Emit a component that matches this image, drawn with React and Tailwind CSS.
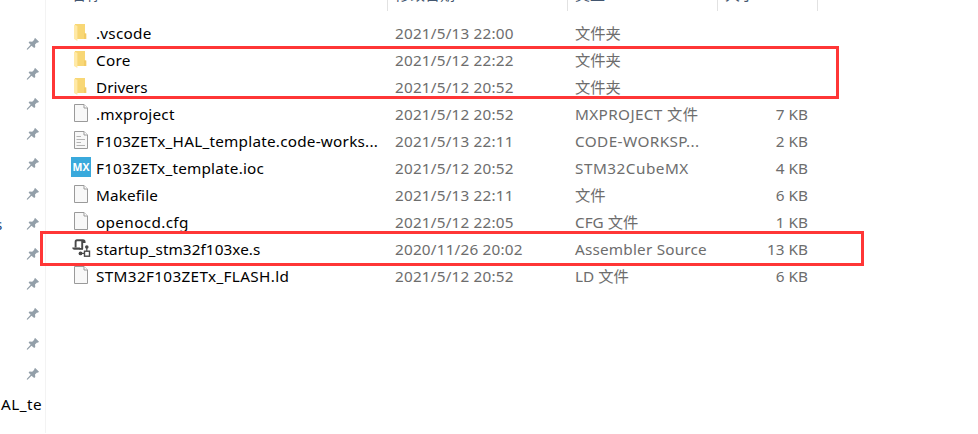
import React from 'react';

const files = [
  { icon: 'folder', name: '.vscode', track: 'tracking-[0.25px]', date: '2021/5/13 22:00', type: '文件夹', size: '' },
  { icon: 'folder', name: 'Core', track: 'tracking-[0.25px]', date: '2021/5/12 22:22', type: '文件夹', size: '' },
  { icon: 'folder', name: 'Drivers', track: 'tracking-[0px]', date: '2021/5/12 20:52', type: '文件夹', size: '' },
  { icon: 'file', name: '.mxproject', track: 'tracking-[0.2px]', date: '2021/5/12 20:52', type: 'MXPROJECT 文件', typeTrack: 'tracking-[0.37px]', size: '7 KB' },
  { icon: 'text', name: 'F103ZETx_HAL_template.code-works...', track: 'tracking-[0.23px]', date: '2021/5/13 22:11', type: 'CODE-WORKSP...', typeTrack: 'tracking-[0.4px]', size: '2 KB' },
  { icon: 'mx', name: 'F103ZETx_template.ioc', track: 'tracking-[0.21px]', date: '2021/5/12 20:52', type: 'STM32CubeMX', typeTrack: 'tracking-[0.5px]', size: '4 KB' },
  { icon: 'file', name: 'Makefile', track: 'tracking-[0.12px]', date: '2021/5/13 22:11', type: '文件', size: '6 KB' },
  { icon: 'file', name: 'openocd.cfg', track: 'tracking-[0.35px]', date: '2021/5/12 22:05', type: 'CFG 文件', size: '1 KB' },
  { icon: 'asm', name: 'startup_stm32f103xe.s', track: 'tracking-[0.07px]', date: '2020/11/26 20:02', type: 'Assembler Source', typeTrack: 'tracking-[0.2px]', size: '13 KB' },
  { icon: 'file', name: 'STM32F103ZETx_FLASH.ld', track: 'tracking-[0.34px]', date: '2021/5/12 20:52', type: 'LD 文件', size: '6 KB' },
];

function FolderIcon() {
  return (
    <svg width="20" height="20" viewBox="0 0 20 20">
      <path d="M4 2H14V11.5H15.2V17H6L4 15.5Z" fill="#f8d775" />
      <path d="M13 11.5H15.2V17H13Z" fill="#f2cb66" />
      <path d="M3 2.4L6.4 4V19L3 17Z" fill="#ffe9a6" />
    </svg>
  );
}

function FileIcon({ lines }) {
  return (
    <svg width="20" height="20" viewBox="0 0 20 20">
      <path d="M3.5 1.5H13L16.5 5V18.5H3.5Z" fill="#f8f8f8" stroke="#9a9a9a" />
      <path d="M13 1.5V5H16.5" fill="#fff" stroke="#9a9a9a" />
      {lines && <path d="M5.5 6.5H10M5.5 9.5H14M5.5 12.5H10M5.5 15.5H14" stroke="#b4b4b4" />}
    </svg>
  );
}

function AsmIcon() {
  return (
    <svg width="20" height="20" viewBox="0 0 20 20" fill="none" stroke="#484848">
      <path d="M4.6 9.5V4Q4.6 2.2 6 2.2H12Q13.6 2.2 13.6 4H11.2V11" strokeWidth="1.9" />
      <path d="M1.2 9.6H9V11.8H3Q1.2 11.6 1.2 9.6Z" fill="#484848" stroke="none" />
      <path d="M8.5 10.9H12" strokeWidth="1.8" />
      <path d="M15.8 9V13M9.5 15.4H13" strokeWidth="1.2" />
      <circle cx="15.8" cy="9" r="1.8" fill="#484848" stroke="none" />
      <circle cx="9.5" cy="15.4" r="1.9" fill="#484848" stroke="none" />
      <rect x="13.5" y="13.2" width="5" height="5" fill="#fff" strokeWidth="1.4" />
    </svg>
  );
}

function MxIcon() {
  return (
    <div className="flex h-5 w-5 items-center justify-center bg-[#39a9dc] font-['Open_Sans',sans-serif] text-[10.5px] leading-none font-bold text-white">
      MX
    </div>
  );
}

function RowIcon({ kind }) {
  if (kind === 'folder') return <FolderIcon />;
  if (kind === 'mx') return <MxIcon />;
  if (kind === 'asm') return <AsmIcon />;
  return <FileIcon lines={kind === 'text'} />;
}

function Pin() {
  return (
    <svg className="block" width="14" height="14" viewBox="0 0 14 14">
      <path
        d="M9.2 1L13 4.8L11.8 5.8L11 5.5L9 7.5L9.3 10L8.2 11L5.5 8.7L1.5 12.8L0.8 12.6L0.9 11.8L4.6 7.8L2.6 5.6L3.5 4.5L6.2 4.7L8.3 2.8L8.1 2Z"
        fill="#939fa9"
      />
    </svg>
  );
}

function Sidebar() {
  return (
    <aside className="relative h-[433px] w-[46px] shrink-0 overflow-hidden border-r border-[#f3f3f3]">
      <div className="flex flex-col gap-4 pt-[37px] pl-[26px]">
        {Array.from({ length: 12 }, (_, i) => (
          <Pin key={i} />
        ))}
      </div>
      <div className="absolute top-[213px] -left-[5px] text-[#1c4a80]">s</div>
      <div className="mt-3 pl-[1px] tracking-[0.5px] whitespace-nowrap">AL_te</div>
    </aside>
  );
}

function HeaderCell({ className, children }) {
  return (
    <div className={'h-full shrink-0 border-r border-[#e2e2e2] ' + className}>
      <div className="-mt-4">{children}</div>
    </div>
  );
}

function Header() {
  return (
    <div className="flex h-[11px] overflow-hidden text-[15px] leading-5 text-[#43566f]">
      <HeaderCell className="w-[342px] pl-[25px]">名称</HeaderCell>
      <HeaderCell className="w-[180px] pl-[7px]">修改日期</HeaderCell>
      <HeaderCell className="w-[150px] pl-[7px]">类型</HeaderCell>
      <HeaderCell className="w-[100px] pl-[7px]">大小</HeaderCell>
    </div>
  );
}

export default function App() {
  return (
    <div className="relative flex h-[434px] w-[978px] overflow-hidden bg-white font-['Noto_Sans','Noto_Sans_CJK_SC',sans-serif] text-[15.3px] leading-[22px] text-black">
      <Sidebar />
      <main className="min-w-0 flex-1">
        <Header />
        <div className="pt-[9px]">
          {files.map((f) => (
            <div key={f.name} className="flex h-[27px] items-start pt-[2px] whitespace-nowrap text-[#6d6d6d]">
              <div className="w-[50px] shrink-0 pl-[25px]"><RowIcon kind={f.icon} /></div>
              <div className={'w-[299px] shrink-0 text-black ' + f.track}>{f.name}</div>
              <div className="w-[180px] shrink-0 tracking-[0.2px]">{f.date}</div>
              <div className={'w-[150px] shrink-0 ' + (f.typeTrack || '')}>{f.type}</div>
              <div className="w-[83px] shrink-0 text-right">{f.size}</div>
            </div>
          ))}
        </div>
      </main>
      <div className="absolute top-[46px] left-[52px] h-[53px] w-[787px] border-3 border-[#ff3636]" />
      <div className="absolute top-[231px] left-[40px] h-[35px] w-[824px] border-3 border-[#ff3636]" />
    </div>
  );
}
